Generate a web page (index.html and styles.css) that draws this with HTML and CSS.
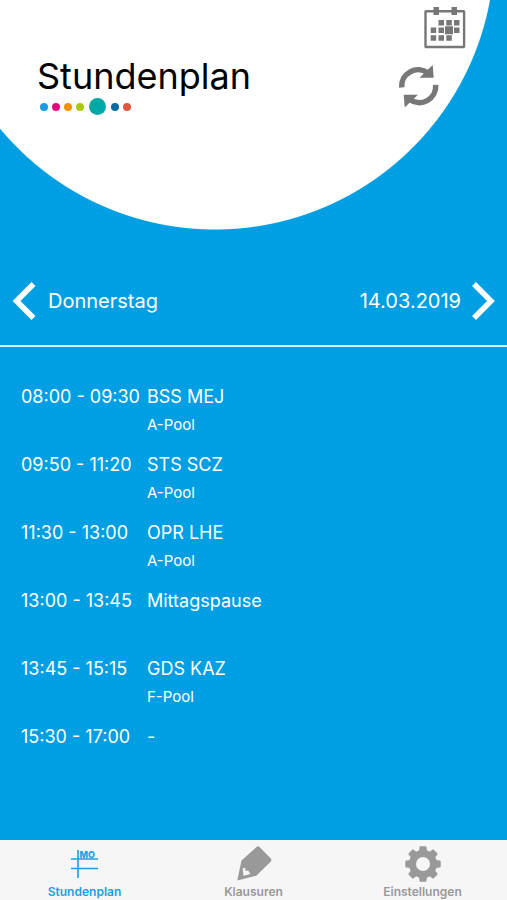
FILE: index.html
```html
<!doctype html>
<html lang="de">
<head>
  <meta charset="utf-8">
  <meta name="viewport" content="width=device-width, initial-scale=1">
  <title>Stundenplan</title>
  <link rel="stylesheet" href="styles.css">
</head>
<body>
  <header class="header">
    <div class="brand">
      <h1>Stundenplan</h1>
      <div class="dots">
        <span class="dot blue"></span>
        <span class="dot pink"></span>
        <span class="dot orange"></span>
        <span class="dot green"></span>
        <span class="dot teal"></span>
        <span class="dot navy"></span>
        <span class="dot red"></span>
      </div>
    </div>
    <div class="actions">
      <button type="button" class="icon-button" aria-label="Kalender">
        <svg width="42" height="42" viewBox="0 0 42 42" fill="#777">
          <rect x="1.5" y="4.2" width="38.6" height="35.8" rx="0.5" fill="none" stroke="#777" stroke-width="2.4"/>
          <path d="M9.5 0H15v8H9.5zM27.500 0H33v8h-5.500z"/>
          <path d="M14.500 13H20v5.500h-5.500zM22.300 13h5.500v5.500h-5.500zM30 13h5.500v5.500H30z"/>
          <path d="M6.700 20.600h5.500v5.500H6.700zM14.500 20.600H20v5.500h-5.500zM21 19.300h8v8h-8zM30 20.600h5.500v5.500H30z"/>
          <path d="M6.700 28.200h5.500v5.500H6.700zM14.500 28.200H20v5.500h-5.500zM22.300 28.200h5.500v5.500h-5.500z"/>
        </svg>
      </button>
      <button type="button" class="icon-button refresh" aria-label="Aktualisieren">
        <svg width="42" height="44" viewBox="0 0 42 44">
          <g id="arrow">
            <path d="M3.700 23.500A16.500 16.500 0 0 1 30 9" fill="none" stroke="#777" stroke-width="5.500"/>
            <path d="M34.700 1L35.700 13.700H21.500z" fill="#777"/>
          </g>
          <use href="#arrow" transform="rotate(180 20.700 22.200)"/>
        </svg>
      </button>
    </div>
  </header>

  <nav class="day-nav">
    <button type="button" class="icon-button" aria-label="Vorheriger Tag">
      <svg width="24" height="40" viewBox="0 0 24 40" fill="none" stroke="#fff" stroke-width="5.500">
        <path d="M21.500 3L4.500 20L21.500 37"/>
      </svg>
    </button>
    <span class="weekday">Donnerstag</span>
    <time datetime="2019-03-14">14.03.2019</time>
    <button type="button" class="icon-button" aria-label="Nächster Tag">
      <svg width="24" height="40" viewBox="0 0 24 40" fill="none" stroke="#fff" stroke-width="5.500">
        <path d="M3 3L20 20L3 37"/>
      </svg>
    </button>
  </nav>

  <main>
    <table class="lessons">
      <tr>
        <th scope="row">08:00 - 09:30</th>
        <td>BSS MEJ <span class="room">A-Pool</span></td>
      </tr>
      <tr>
        <th scope="row">09:50 - 11:20</th>
        <td>STS SCZ <span class="room">A-Pool</span></td>
      </tr>
      <tr>
        <th scope="row">11:30 - 13:00</th>
        <td>OPR LHE <span class="room">A-Pool</span></td>
      </tr>
      <tr>
        <th scope="row">13:00 - 13:45</th>
        <td>Mittagspause</td>
      </tr>
      <tr>
        <th scope="row">13:45 - 15:15</th>
        <td>GDS KAZ <span class="room">F-Pool</span></td>
      </tr>
      <tr>
        <th scope="row">15:30 - 17:00</th>
        <td>-</td>
      </tr>
    </table>
  </main>

  <nav class="tabbar">
    <a href="#stundenplan" class="tab active" aria-current="page">
      <svg width="36" height="36" viewBox="0 0 36 36">
        <path d="M11 4v28M4 13h27M4 22.500h27" fill="none" stroke="currentColor" stroke-width="1.600"/>
        <text x="12.500" y="12" class="icon-text">MO</text>
      </svg>
      Stundenplan
    </a>
    <a href="#klausuren" class="tab">
      <svg width="36" height="36" viewBox="0 0 36 36" fill="currentColor" fill-rule="evenodd">
        <path d="M1.300 34.500L5.500 14.500L20.500 1Q22 -.5 23.500 1L34.800 12.500Q36 14 34.800 15.500L20.300 29.700zM6.700 22.300L7.500 29.700L14.500 28L12.200 24.500L9.500 25L9.300 22z"/>
      </svg>
      Klausuren
    </a>
    <a href="#einstellungen" class="tab">
      <svg width="36" height="36" viewBox="0 0 36 36">
        <circle cx="18" cy="18" r="10.500" fill="none" stroke="currentColor" stroke-width="7"/>
        <g fill="currentColor">
          <path id="teeth" d="M15.500.3h5q1 0 1 1l.8 6.500h-8.600l.8-6.500q0-1 1-1zM15.500 35.700h5q1 0 1-1l.8-6.500h-8.600l.8 6.500q0 1 1 1z"/>
          <use href="#teeth" transform="rotate(45 18 18)"/>
          <use href="#teeth" transform="rotate(90 18 18)"/>
          <use href="#teeth" transform="rotate(135 18 18)"/>
        </g>
      </svg>
      Einstellungen
    </a>
  </nav>
</body>
</html>
```

FILE: styles.css
```css
:root {
  --blue: #009fe3;
  --bar: #f6f6f6;
  --gray: #999;
}
* { box-sizing: border-box; margin: 0; padding: 0; }
body {
  min-height: 100vh;
  display: flex;
  flex-direction: column;
  font-family: Inter, 'Liberation Sans', sans-serif;
  color: #fff;
  background: var(--blue);
}
.icon-button {
  display: block;
  border: none;
  background: none;
  cursor: pointer;
}
svg { display: block; }
/* Header with the white circle */
.header {
  display: flex;
  justify-content: space-between;
  min-height: 232px;
  padding: 7px 41px 0 37px;
  background: radial-gradient(circle at 215px -50px, #fff 279px, transparent 280px);
}
.brand {
  padding-top: 47px;
  color: #000;
}
.brand h1 {
  font-size: 36px;
  font-weight: 400;
  line-height: 44px;
}
.dots {
  display: flex;
  align-items: center;
  gap: 4px;
  padding-left: 3px;
}
.dot {
  width: 8px;
  height: 8px;
  border-radius: 50%;
}
.blue { background: #1a9ae0; }
.pink { background: #e5087e; }
.orange { background: #f39200; }
.green { background: #a8c90a; }
.teal { width: 17px; height: 17px; margin: 0 1px; background: #00a9a6; }
.navy { background: #0a6a9c; }
.red { background: #e2573f; }
.actions {
  display: flex;
  flex-direction: column;
  gap: 15px;
}
.refresh { margin-left: -26px; }
/* Day switcher */
.day-nav {
  display: flex;
  align-items: center;
  gap: 10px;
  height: 115px;
  padding: 24px 12px 0;
  border-bottom: 2px solid #d9f3ff;
  font-size: 20px;
  line-height: 26px;
}
.weekday {
  flex: 1;
  padding-left: 2px;
}
/* Lessons */
main {
  flex: 1;
  padding: 36px 21px 0;
}
.lessons {
  border-collapse: collapse;
  font-size: 18px;
  line-height: 28px;
}
.lessons tr { height: 68px; }
.lessons th,
.lessons td {
  vertical-align: top;
  text-align: left;
  font-weight: 400;
  white-space: nowrap;
}
.lessons th { width: 126px; }
.room {
  display: block;
  font-size: 15px;
}
/* Tab bar */
.tabbar {
  display: flex;
  height: 60px;
  background: var(--bar);
}
.tab {
  flex: 1;
  display: flex;
  flex-direction: column;
  align-items: center;
  gap: 2px;
  padding-top: 6px;
  color: var(--gray);
  font-size: 12px;
  font-weight: 600;
  line-height: 16px;
  text-decoration: none;
}
.active { color: #1c9fe0; }
.icon-text {
  font-size: 9px;
  font-weight: 800;
  fill: currentColor;
}
```
